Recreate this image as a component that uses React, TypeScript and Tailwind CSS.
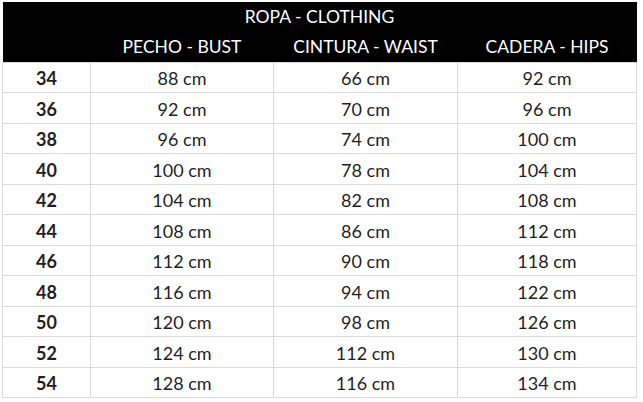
const rows: [string, string, string, string][] = [
  ['34', '88 cm', '66 cm', '92 cm'],
  ['36', '92 cm', '70 cm', '96 cm'],
  ['38', '96 cm', '74 cm', '100 cm'],
  ['40', '100 cm', '78 cm', '104 cm'],
  ['42', '104 cm', '82 cm', '108 cm'],
  ['44', '108 cm', '86 cm', '112 cm'],
  ['46', '112 cm', '90 cm', '118 cm'],
  ['48', '116 cm', '94 cm', '122 cm'],
  ['50', '120 cm', '98 cm', '126 cm'],
  ['52', '124 cm', '112 cm', '130 cm'],
  ['54', '128 cm', '116 cm', '134 cm'],
]

export default function App() {
  return (
    <div className="w-[643px] h-[402px] bg-white pt-[2px] pl-[2px]" style={{ fontFamily: 'Lato, "Open Sans", sans-serif' }}>
      <table className="w-[635px] border-collapse text-[18px] leading-[24px] text-[#1f1f1f]">
        <colgroup>
          <col className="w-[88px]" />
          <col className="w-[183px]" />
          <col className="w-[184px]" />
          <col />
        </colgroup>
        <thead className="bg-black text-white text-[17.5px]">
          <tr className="h-[30px]">
            <th colSpan={4} className="font-normal text-center">ROPA - CLOTHING</th>
          </tr>
          <tr className="h-[30px]">
            <th />
            <th className="font-normal text-center">PECHO - BUST</th>
            <th className="font-normal text-center">CINTURA - WAIST</th>
            <th className="font-normal text-center">CADERA - HIPS</th>
          </tr>
        </thead>
        <tbody>
          {rows.map((r) => (
            <tr key={r[0]} className="h-[30.5px]">
              <td className="border border-[#dadada] text-center font-bold pt-[2px]">{r[0]}</td>
              <td className="border border-[#dadada] text-center pt-[2px]">{r[1]}</td>
              <td className="border border-[#dadada] text-center pt-[2px]">{r[2]}</td>
              <td className="border border-[#dadada] text-center pt-[2px]">{r[3]}</td>
            </tr>
          ))}
        </tbody>
      </table>
    </div>
  )
}
